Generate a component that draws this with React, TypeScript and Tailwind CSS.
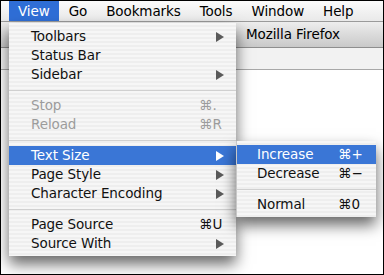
import React from "react";

type Item =
  | { sep: true }
  | {
      sep?: false;
      label: string;
      key?: string;
      sub?: boolean;
      disabled?: boolean;
      active?: boolean;
    };

const viewItems: Item[] = [
  { label: "Toolbars", sub: true },
  { label: "Status Bar" },
  { label: "Sidebar", sub: true },
  { sep: true },
  { label: "Stop", key: "⌘.", disabled: true },
  { label: "Reload", key: "⌘R", disabled: true },
  { sep: true },
  { label: "Text Size", sub: true, active: true },
  { label: "Page Style", sub: true },
  { label: "Character Encoding", sub: true },
  { sep: true },
  { label: "Page Source", key: "⌘U" },
  { label: "Source With", sub: true },
];

const sizeItems: Item[] = [
  { label: "Increase", key: "⌘+", active: true },
  { label: "Decrease", key: "⌘−" },
  { sep: true },
  { label: "Normal", key: "⌘0" },
];

const stripes =
  "bg-[repeating-linear-gradient(180deg,#f6f6f6_0px,#f6f6f6_2px,#eeeeee_2px,#eeeeee_4px)]";

function Arrow({ light }: { light?: boolean }) {
  return (
    <svg width="8" height="10" viewBox="0 0 8 10" className="shrink-0">
      <path d="M0 0 L8 5 L0 10 Z" fill={light ? "#ffffff" : "#5a5a5a"} />
    </svg>
  );
}

function MenuRows({
  items,
  keyCol,
  padL,
}: {
  items: Item[];
  keyCol: string;
  padL: string;
}) {
  return (
    <>
      {items.map((it, i) =>
        it.sep ? (
          <div key={i} className="h-[12px] flex items-center">
            <div className="h-px w-full bg-[#d0d0d0]" />
          </div>
        ) : (
          <div
            key={i}
            className={`h-[19px] flex items-center pr-[12px] ${padL} ${
              it.active
                ? "bg-[#3a76d6] text-white"
                : it.disabled
                ? "text-[#9c9c9c]"
                : "text-[#111]"
            }`}
          >
            <span className="flex-1 whitespace-nowrap">{it.label}</span>
            {it.key && <span className={`${keyCol} whitespace-nowrap`}>{it.key}</span>}
            {it.sub && <Arrow light={it.active} />}
          </div>
        )
      )}
    </>
  );
}

export default function App() {
  return (
    <div className="relative w-[384px] h-[275px] overflow-hidden border border-black bg-white font-['DejaVu_Sans',sans-serif] text-[13.5px] tracking-[-0.1px]">
      {/* menu bar */}
      <div className="h-[21px] flex items-stretch pl-[8px] gap-[1px] bg-gradient-to-b from-[#fbfbfb] to-[#e9e9e9] border-b border-[#9a9a9a]">
        <div className="px-[9px] flex items-center bg-[#2f6ed6] text-white">View</div>
        <div className="px-[9px] flex items-center">Go</div>
        <div className="px-[9px] flex items-center">Bookmarks</div>
        <div className="px-[9px] flex items-center">Tools</div>
        <div className="px-[9px] flex items-center">Window</div>
        <div className="px-[9px] flex items-center">Help</div>
      </div>

      {/* browser window behind */}
      <div className="flex flex-col">
        <div className="h-[26px] flex items-center bg-gradient-to-b from-[#ededed] to-[#c9c9c9] border-b border-[#8e8e8e] pl-[245px] text-black">
          Mozilla Firefox
        </div>
        <div className="h-[22px] bg-[#f2f2f2] border-b border-[#a8a8a8]" />
        <div className="h-[205px] bg-white" />
      </div>

      {/* View menu */}
      <div
        className={`absolute left-[8px] top-[22px] w-[227px] pt-[4px] pb-[3px] ${stripes} shadow-[0_8px_14px_rgba(0,0,0,0.6)]`}
      >
        <MenuRows items={viewItems} keyCol="w-[25px]" padL="pl-[22px]" />
      </div>

      {/* Text Size submenu */}
      <div
        className={`absolute left-[235px] top-[140px] w-[140px] pt-[4px] pb-[3px] ${stripes} border-l border-[#c8c8c8] shadow-[0_8px_14px_rgba(0,0,0,0.6)]`}
      >
        <MenuRows items={sizeItems} keyCol="w-[26px]" padL="pl-[20px]" />
      </div>
    </div>
  );
}
